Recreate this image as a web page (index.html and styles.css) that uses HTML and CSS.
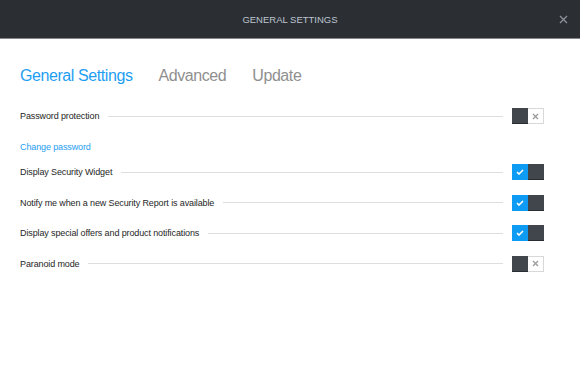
FILE: index.html
```html
<!DOCTYPE html>
<html>
<head>
<meta charset="utf-8">
<link rel="stylesheet" href="styles.css">
</head>
<body>
<div class="window">
  <header class="titlebar">
    <span class="title">GENERAL SETTINGS</span>
    <svg class="close" width="9" height="9" viewBox="0 0 9 9"><path d="M1 1L8 8M8 1L1 8" stroke="#8d939b" stroke-width="1.3" fill="none"/></svg>
  </header>
  <main class="content">
    <nav class="tabs">
      <span class="tab active">General Settings</span>
      <span class="tab">Advanced</span>
      <span class="tab">Update</span>
    </nav>
    <div class="row first">
      <span class="label">Password protection</span>
      <span class="rule"></span>
      <span class="toggle off"><span class="knob"></span><span class="state"><svg width="7" height="7" viewBox="0 0 7 7"><path d="M1 1L6 6M6 1L1 6" stroke="#9a9a9a" stroke-width="1.3" fill="none"/></svg></span></span>
    </div>
    <div class="linkrow"><a class="link">Change password</a></div>
    <div class="row">
      <span class="label">Display Security Widget</span>
      <span class="rule"></span>
      <span class="toggle on"><span class="state"><svg width="8" height="6" viewBox="0 0 8 6"><path d="M1 3.2L3 5L7 1" stroke="#fff" stroke-width="1.6" fill="none"/></svg></span><span class="knob"></span></span>
    </div>
    <div class="row">
      <span class="label">Notify me when a new Security Report is available</span>
      <span class="rule"></span>
      <span class="toggle on"><span class="state"><svg width="8" height="6" viewBox="0 0 8 6"><path d="M1 3.2L3 5L7 1" stroke="#fff" stroke-width="1.6" fill="none"/></svg></span><span class="knob"></span></span>
    </div>
    <div class="row">
      <span class="label">Display special offers and product notifications</span>
      <span class="rule"></span>
      <span class="toggle on"><span class="state"><svg width="8" height="6" viewBox="0 0 8 6"><path d="M1 3.2L3 5L7 1" stroke="#fff" stroke-width="1.6" fill="none"/></svg></span><span class="knob"></span></span>
    </div>
    <div class="row">
      <span class="label">Paranoid mode</span>
      <span class="rule"></span>
      <span class="toggle off"><span class="knob"></span><span class="state"><svg width="7" height="7" viewBox="0 0 7 7"><path d="M1 1L6 6M6 1L1 6" stroke="#9a9a9a" stroke-width="1.3" fill="none"/></svg></span></span>
    </div>
  </main>
</div>
</body>
</html>
```

FILE: styles.css
```css
html, body {
  margin: 0;
  padding: 0;
  background: #ffffff;
}
body {
  font-family: "Liberation Sans", Arial, sans-serif;
  width: 580px;
  height: 385px;
  overflow: hidden;
}
.titlebar {
  height: 38px;
  background: #2b2e33;
  border-bottom: 1px solid #83878d;
  display: flex;
  align-items: center;
  justify-content: center;
  position: relative;
}
.title {
  color: #bcc5d1;
  font-size: 9.5px;
}
.close {
  position: absolute;
  right: 12px;
  top: 15px;
}
.content {
  padding: 27px 36px 0 20px;
}
.tabs {
  display: flex;
  gap: 26px;
  height: 20px;
  line-height: 20px;
  margin-bottom: 15px;
}
.tab {
  font-size: 16px;
  letter-spacing: -0.42px;
  color: #8f8f8f;
}
.tab.active {
  color: #1e9ef2;
}
.row {
  height: 30.5px;
  display: flex;
  align-items: center;
}
.row.first {
  height: 30px;
}
.label {
  font-size: 9px;
  letter-spacing: -0.12px;
  color: #262626;
  white-space: nowrap;
}
.rule {
  flex: 1;
  height: 1px;
  background: #dedede;
  margin: 0 9px;
}
.linkrow {
  height: 26px;
  padding-top: 7px;
  box-sizing: border-box;
  line-height: 14px;
}
.link {
  font-size: 9px;
  letter-spacing: -0.12px;
  color: #1e9ef2;
}
.toggle {
  display: flex;
  width: 32px;
  height: 16px;
}
.knob {
  width: 16px;
  height: 16px;
  box-sizing: border-box;
  background: #41464d;
  border-bottom: 1px solid #2a2d31;
}
.state {
  width: 16px;
  height: 16px;
  box-sizing: border-box;
  display: flex;
  align-items: center;
  justify-content: center;
}
.toggle.off .state {
  background: #fff;
  border: 1px solid #d8d8d8;
  border-left: none;
}
.toggle.on .state {
  background: #0e9bf4;
}
```
